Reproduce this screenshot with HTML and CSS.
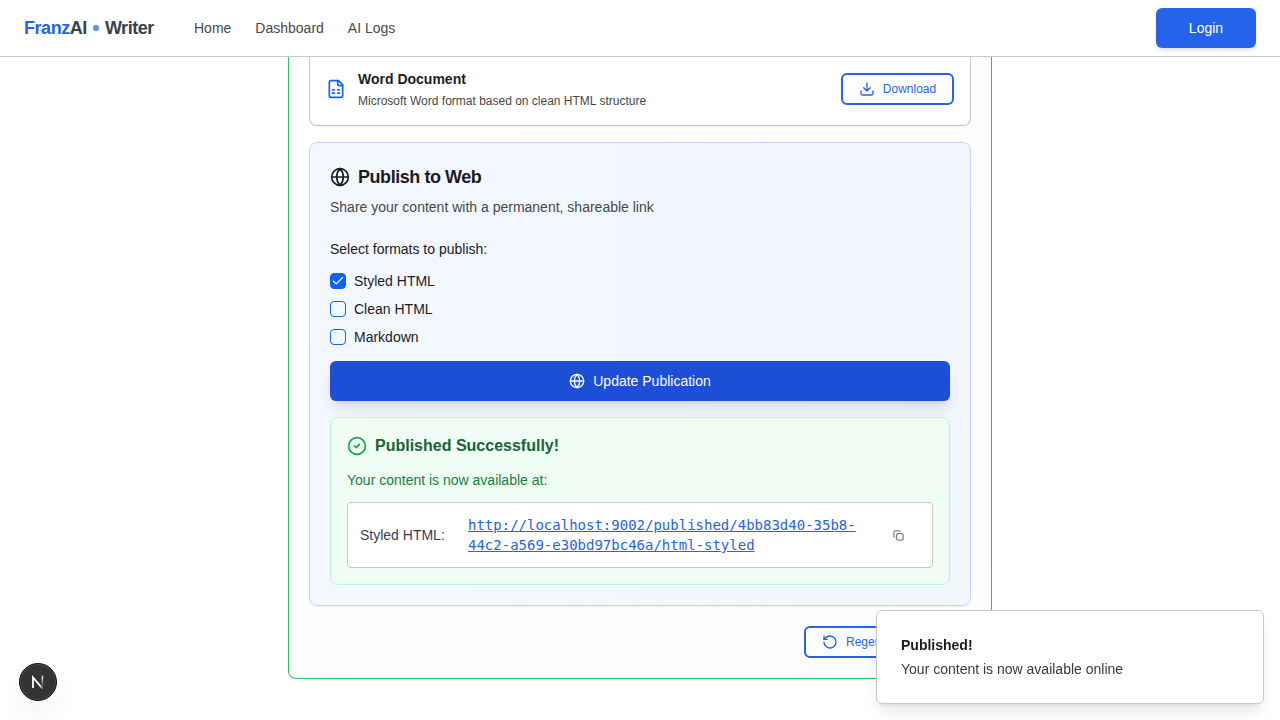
FILE: index.html
```html
<!DOCTYPE html>
<html lang="en">
<head>
<meta charset="utf-8">
<title>FranzAI Writer</title>
<link rel="stylesheet" href="styles.css">
</head>
<body>
<svg class="sprite" aria-hidden="true">
  <symbol id="globe" viewBox="0 0 24 24"><circle cx="12" cy="12" r="10"/><path d="M12 2a14.5 14.5 0 0 0 0 20 14.5 14.5 0 0 0 0-20M2 12h20"/></symbol>
</svg>
<header class="header">
  <a class="logo"><span class="logo-franz">Franz</span><span>AI</span><i class="logo-dot"></i><span>Writer</span></a>
  <nav class="nav"><a>Home</a><a>Dashboard</a><a>AI Logs</a></nav>
  <button class="btn login">Login</button>
</header>
<main class="main">
  <section class="stage">
    <div class="document">
      <svg class="icon icon-doc" viewBox="0 0 24 24"><path d="M15 2H6a2 2 0 0 0-2 2v16a2 2 0 0 0 2 2h12a2 2 0 0 0 2-2V7Z"/><path d="M14 2v4a2 2 0 0 0 2 2h4M8 13h2M14 13h2M8 17h2M14 17h2"/></svg>
      <div class="document-text">
        <h4>Word Document</h4>
        <p>Microsoft Word format based on clean HTML structure</p>
      </div>
      <button class="btn outline"><svg class="icon icon-sm" viewBox="0 0 24 24"><path d="M21 15v4a2 2 0 0 1-2 2H5a2 2 0 0 1-2-2v-4M7 10l5 5 5-5M12 15V3"/></svg><span>Download</span></button>
    </div>
    <div class="publish">
      <h3 class="publish-title"><svg class="icon"><use href="#globe"/></svg><span>Publish to Web</span></h3>
      <p class="publish-desc">Share your content with a permanent, shareable link</p>
      <p class="formats-label">Select formats to publish:</p>
      <div class="formats">
        <label class="format"><span class="check checked"><svg class="tick" viewBox="0 0 24 24"><path d="M20 6 9 17l-5-5"/></svg></span><span>Styled HTML</span></label>
        <label class="format"><span class="check"></span><span>Clean HTML</span></label>
        <label class="format"><span class="check"></span><span>Markdown</span></label>
      </div>
      <button class="btn update"><svg class="icon icon-sm"><use href="#globe"/></svg><span>Update Publication</span></button>
      <div class="success">
        <h4 class="success-title"><svg class="icon icon-ok" viewBox="0 0 24 24"><circle cx="12" cy="12" r="10"/><path d="m9 12 2 2 4-4"/></svg><span>Published Successfully!</span></h4>
        <p class="success-desc">Your content is now available at:</p>
        <div class="result">
          <span class="result-label">Styled HTML:</span>
          <a class="result-link">http://localhost:9002/published/4bb83d40-35b8-<br>44c2-a569-e30bd97bc46a/html-styled</a>
          <button class="copy"><svg class="icon icon-copy" viewBox="0 0 24 24"><rect x="8" y="8" width="14" height="14" rx="2"/><path d="M4 16c-1.1 0-2-.9-2-2V4c0-1.1.9-2 2-2h10c1.1 0 2 .9 2 2"/></svg></button>
        </div>
      </div>
    </div>
    <div class="actions">
      <button class="btn outline regenerate"><svg class="icon icon-sm" viewBox="0 0 24 24"><path d="M3 12a9 9 0 1 0 9-9 9.75 9.75 0 0 0-6.74 2.74L3 8"/><path d="M3 3v5h5"/></svg><span>Regenerate</span></button>
    </div>
  </section>
</main>
<div class="toast">
  <strong>Published!</strong>
  <span>Your content is now available online</span>
</div>
<div class="dev-badge">
  <svg class="dev-logo" viewBox="0 0 36 36">
    <defs>
      <linearGradient id="fade-diagonal" x1="17" y1="17" x2="23" y2="25" gradientUnits="userSpaceOnUse"><stop offset=".5" stop-color="#fff"/><stop offset="1" stop-color="#fff" stop-opacity=".25"/></linearGradient>
      <linearGradient id="fade-stem" x1="0" y1="12" x2="0" y2="23" gradientUnits="userSpaceOnUse"><stop offset="0" stop-color="#fff"/><stop offset="1" stop-color="#fff" stop-opacity="0"/></linearGradient>
    </defs>
    <path d="M13 24V13.4L22.6 24.6" stroke="url(#fade-diagonal)" stroke-width="1.8"/>
    <path d="M22.4 12.4h.01V22" stroke="url(#fade-stem)" stroke-width="1.6"/>
  </svg>
</div>
</body>
</html>
```

FILE: styles.css
```css
* { box-sizing: border-box; }
body {
  margin: 0;
  height: 720px;
  overflow: hidden;
  background: #fff;
  color: #1c1c1e;
  font: 14px/20px "Liberation Sans", Arial, sans-serif;
}
h3, h4, p { margin: 0; }
button { font: inherit; }
.sprite { position: absolute; width: 0; height: 0; }
.icon {
  width: 20px;
  height: 20px;
  flex: none;
  fill: none;
  stroke: currentColor;
  stroke-width: 2;
  stroke-linecap: round;
  stroke-linejoin: round;
}
.icon-sm { width: 16px; height: 16px; }

.header {
  display: flex;
  align-items: center;
  height: 57px;
  padding: 0 24px;
  border-bottom: 1px solid #c8c8c8;
  background: #fff;
}
.logo {
  display: flex;
  align-items: center;
  width: 130px;
  color: #374151;
  font-size: 18px;
  font-weight: 700;
  letter-spacing: -.45px;
}
.logo-franz { color: #2563eb; }
.logo-dot {
  width: 6px;
  height: 6px;
  margin: 0 6px;
  border-radius: 50%;
  background: #5b8df5;
}
.nav { display: flex; gap: 24px; margin-left: 40px; color: #48484a; }
.btn {
  display: flex;
  align-items: center;
  justify-content: center;
  gap: 8px;
  border: 0;
  border-radius: 6px;
}
.login {
  width: 100px;
  height: 40px;
  margin-left: auto;
  background: #2563eb;
  color: #fff;
  box-shadow: 0 4px 6px -1px rgba(0,0,0,.08), 0 2px 4px -2px rgba(0,0,0,.08);
}

.main { display: flex; justify-content: center; }
.stage {
  width: 704px;
  height: 622px;
  padding: 0 20px 20px;
  border: 1px solid #22c55e;
  border-top: 0;
  border-radius: 0 0 8px 8px;
  background: linear-gradient(135deg, #fff, #fcfcfc);
}
.document {
  display: flex;
  align-items: center;
  height: 69px;
  padding: 0 16px;
  border: 1px solid #c8c8c8;
  border-top: 0;
  border-radius: 0 0 8px 8px;
  background: #fff;
  box-shadow: 0 1px 2px rgba(0,0,0,.05);
}
.document .icon-doc { color: #0f62fe; margin: -5px 12px 0 0; }
.document-text { flex: 1; margin-top: -4px; }
.document-text h4 { line-height: 20px; }
.document-text p { margin-top: 4px; color: #48484a; font-size: 12px; line-height: 16px; }
.outline {
  height: 32px;
  padding: 0 16px;
  border: 2px solid #2563eb;
  background: #fff;
  color: #2563eb;
  font-size: 12px;
}
.document .outline { width: 113px; margin-top: -5px; }

.publish {
  height: 464px;
  margin-top: 16px;
  padding: 20px;
  border: 1px solid #bfd7fb;
  border-radius: 8px;
  background: linear-gradient(90deg, #f3f7ff, #f1f6fe);
  box-shadow: 0 1px 2px rgba(0,0,0,.05);
}
.publish-title {
  display: flex;
  align-items: center;
  gap: 8px;
  height: 28px;
  font-size: 18px;
  letter-spacing: -.45px;
}
.publish-desc { margin-top: 6px; color: #48484a; }
.formats-label { margin-top: 22px; }
.formats { display: grid; gap: 8px; margin-top: 12px; }
.format { display: flex; align-items: center; gap: 8px; }
.check {
  display: grid;
  place-items: center;
  width: 16px;
  height: 16px;
  border: 1px solid #0f62fe;
  border-radius: 4px;
}
.checked { background: #0f62fe; }
.tick { width: 14px; height: 14px; fill: none; stroke: #fff; stroke-width: 2; stroke-linecap: round; stroke-linejoin: round; }
.update {
  width: 100%;
  height: 40px;
  margin-top: 14px;
  background: #1d4ed8;
  color: #fff;
  box-shadow: 0 10px 15px -3px rgba(0,0,0,.1), 0 4px 6px -4px rgba(0,0,0,.1);
}
.success {
  position: relative;
  height: 168px;
  margin-top: 16px;
  padding: 16px;
  border: 1px solid #bbf7d0;
  border-radius: 8px;
  background: #f0fdf4;
}
.success-title {
  display: flex;
  align-items: center;
  gap: 8px;
  height: 24px;
  color: #166534;
  font-size: 16px;
}
.icon-ok { color: #16a34a; }
.success-desc { margin-top: 12px; color: #15803d; }
.result {
  display: flex;
  align-items: center;
  height: 66px;
  margin-top: 12px;
  padding: 0 12px;
  border: 1px solid #c8c8c8;
  border-radius: 4px;
  background: #fff;
}
.result-label { width: 108px; color: #374151; }
.result-link {
  flex: 1;
  color: #2563eb;
  font-family: "DejaVu Sans Mono", monospace;
  text-decoration: underline;
}
.copy {
  display: grid;
  place-items: center;
  width: 46px;
  height: 32px;
  padding: 0 0 0 2px;
  border: 0;
  background: none;
  color: #4b5563;
}
.icon-copy { width: 11px; height: 11px; }
.actions { display: flex; justify-content: flex-end; margin-top: 20px; }
.regenerate { width: 167px; justify-content: flex-start; }

.toast {
  position: fixed;
  right: 16px;
  bottom: 16px;
  display: flex;
  flex-direction: column;
  gap: 4px;
  width: 388px;
  height: 94px;
  padding: 24px;
  border: 1px solid #c8c8c8;
  border-radius: 6px;
  background: #fff;
  box-shadow: 0 10px 15px -3px rgba(0,0,0,.1), 0 4px 6px -4px rgba(0,0,0,.1);
}
.toast span { color: #3a3a3c; }
.dev-badge {
  position: fixed;
  left: 19px;
  bottom: 19px;
  width: 38px;
  height: 38px;
  border: 1px solid #111;
  border-radius: 50%;
  background: #333;
  box-shadow: inset 0 0 0 1px #4a4a4a, 0 16px 32px -8px rgba(0,0,0,.14);
}
.dev-logo { display: block; width: 36px; height: 36px; fill: none; }
```
